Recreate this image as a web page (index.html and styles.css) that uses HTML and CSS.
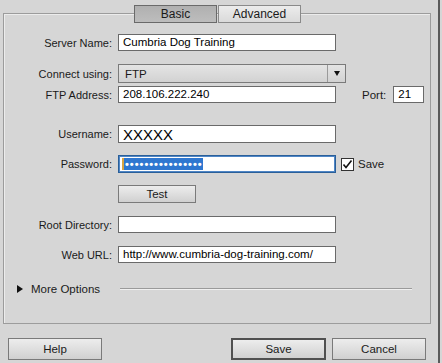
FILE: index.html
```html
<!DOCTYPE html>
<html lang="en">
<head>
    <meta charset="UTF-8">
    <title>Site Setup - Server</title>
    <link rel="stylesheet" href="styles.css">
</head>
<body>
    <div class="window">
        <div class="panel">
            <div class="tabs">
                <div class="tab selected">Basic</div>
                <div class="tab">Advanced</div>
            </div>

            <div class="row first">
                <label>Server Name:</label>
                <div class="field">Cumbria Dog Training</div>
            </div>
            <div class="row connect">
                <label>Connect using:</label>
                <div class="select">
                    <span class="select-value">FTP</span>
                    <span class="select-arrow"></span>
                </div>
            </div>
            <div class="row ftp">
                <label>FTP Address:</label>
                <div class="field">208.106.222.240</div>
                <span class="port-label">Port:</span>
                <div class="field port">21</div>
            </div>
            <div class="row user">
                <label>Username:</label>
                <div class="field big">XXXXX</div>
            </div>
            <div class="row pass">
                <label>Password:</label>
                <div class="field focused"><span class="caret"></span><span class="selection">••••••••••••••••</span></div>
                <span class="checkbox">
                    <svg width="13" height="13" viewBox="0 0 13 13">
                        <rect x="0.5" y="0.5" width="12" height="12" fill="#fff" stroke="#333"/>
                        <path d="M2.5 6.5 L5 9.5 L10.5 2.5" fill="none" stroke="#111" stroke-width="1.6"/>
                    </svg>
                    Save
                </span>
            </div>
            <div class="row test">
                <label></label>
                <button class="btn test-btn">Test</button>
            </div>
            <div class="row root">
                <label>Root Directory:</label>
                <div class="field"></div>
            </div>
            <div class="row web">
                <label>Web URL:</label>
                <div class="field">http://www.cumbria-dog-training.com/</div>
            </div>
            <div class="more">
                <span class="triangle"></span>
                <span class="more-text">More Options</span>
                <span class="more-line"></span>
            </div>
        </div>

        <div class="footer">
            <button class="btn help">Help</button>
            <div class="footer-right">
                <button class="btn default">Save</button>
                <button class="btn">Cancel</button>
            </div>
        </div>
    </div>
</body>
</html>
```

FILE: styles.css
```css
body {
    margin: 0;
    background-color: #d6d6d6;
    font-family: "Liberation Sans", Arial, sans-serif;
    font-size: 11px;
    color: #1a1a1a;
}
.window {
    width: 440px;
    height: 363px;
    border-right: 2px solid #5a5a5a;
    padding-top: 13px;
    box-sizing: border-box;
}
.panel {
    margin-left: 3px;
    width: 428px;
    height: 311px;
    box-sizing: border-box;
    border: 1px solid #9c9c9c;
    box-shadow: inset 1px 1px 0 #ececec;
}
.tabs {
    display: flex;
    justify-content: center;
    gap: 1px;
    margin-top: -9px;
    margin-left: 1px;
}
.tab {
    width: 83px;
    height: 18px;
    box-sizing: border-box;
    border: 1px solid #8a8a8a;
    background: linear-gradient(#ececec, #dadada);
    text-align: center;
    font-size: 12px;
    line-height: 16px;
}
.tab.selected {
    border-color: #6a6a6a;
    background: linear-gradient(#b0b0b0, #bdbdbd);
}
.row {
    display: flex;
    align-items: center;
}
.row label {
    width: 108px;
    margin-right: 6px;
    text-align: right;
}
.row.first { margin-top: 11px; }
.row.connect { margin-top: 13px; }
.row.ftp { margin-top: 3px; }
.row.user { margin-top: 22px; }
.row.pass { margin-top: 12px; }
.row.test { margin-top: 12px; }
.row.root { margin-top: 13px; }
.row.web { margin-top: 13px; }
.field {
    width: 218px;
    height: 17px;
    box-sizing: border-box;
    border: 1px solid #6a6a6a;
    background-color: #fff;
    padding-left: 4px;
    line-height: 15px;
    font-size: 11.5px;
    color: #000;
    white-space: nowrap;
}
.field.big {
    height: 18px;
    font-size: 15px;
    line-height: 17px;
}
.field.focused {
    height: 18px;
    border: 1px solid #2a5f99;
    box-shadow: inset 0 0 0 1px #4f86c6;
    padding-left: 3px;
    display: flex;
    align-items: center;
}
.caret {
    width: 2px;
    height: 12px;
    background-color: #d9a441;
}
.selection {
    background-color: #2f77d0;
    color: #fff;
    height: 12px;
    line-height: 12px;
    font-size: 11px;
    font-weight: bold;
    letter-spacing: 1px;
    padding-left: 1px;
}
.select {
    width: 228px;
    height: 19px;
    box-sizing: border-box;
    border: 1px solid #7a7a7a;
    background: linear-gradient(#e4e4e4, #d2d2d2);
    display: flex;
    align-items: center;
}
.select-value {
    flex: 1;
    padding-left: 6px;
    font-size: 11.5px;
}
.select-arrow {
    width: 17px;
    height: 17px;
    border-left: 1px solid #9a9a9a;
    display: flex;
    align-items: center;
    justify-content: center;
}
.select-arrow::after {
    content: "";
    border-left: 3.5px solid transparent;
    border-right: 3.5px solid transparent;
    border-top: 5px solid #111;
}
.port-label {
    margin-left: 26px;
    margin-right: 7px;
    font-size: 11.5px;
}
.field.port {
    width: 31px;
    padding-left: 4px;
}
.checkbox {
    display: flex;
    align-items: center;
    gap: 4px;
    margin-left: 5px;
    font-size: 11.5px;
}
.checkbox svg {
    display: block;
}
.btn {
    height: 22px;
    box-sizing: border-box;
    border: 1px solid #7a7a7a;
    background: linear-gradient(#ededed, #d0d0d0);
    font-family: "Liberation Sans", Arial, sans-serif;
    font-size: 11.5px;
    color: #1a1a1a;
    padding: 0;
}
.test-btn {
    width: 78px;
    height: 18px;
    line-height: 14px;
}
.more {
    display: flex;
    align-items: center;
    margin-top: 19px;
    height: 14px;
}
.triangle {
    margin-left: 13px;
    border-top: 4px solid transparent;
    border-bottom: 4px solid transparent;
    border-left: 6px solid #111;
}
.more-text {
    margin-left: 8px;
    font-size: 11.5px;
}
.more-line {
    margin-left: 20px;
    width: 292px;
    height: 0;
    border-top: 1px solid #9a9a9a;
    border-bottom: 1px solid #f0f0f0;
}
.footer {
    display: flex;
    justify-content: space-between;
    margin-top: 14px;
    padding-left: 8px;
    padding-right: 12px;
}
.footer .btn {
    width: 94px;
}
.footer-right {
    display: flex;
    gap: 6px;
}
.btn.default {
    border: 2px solid #505050;
    width: 95px;
}
```
